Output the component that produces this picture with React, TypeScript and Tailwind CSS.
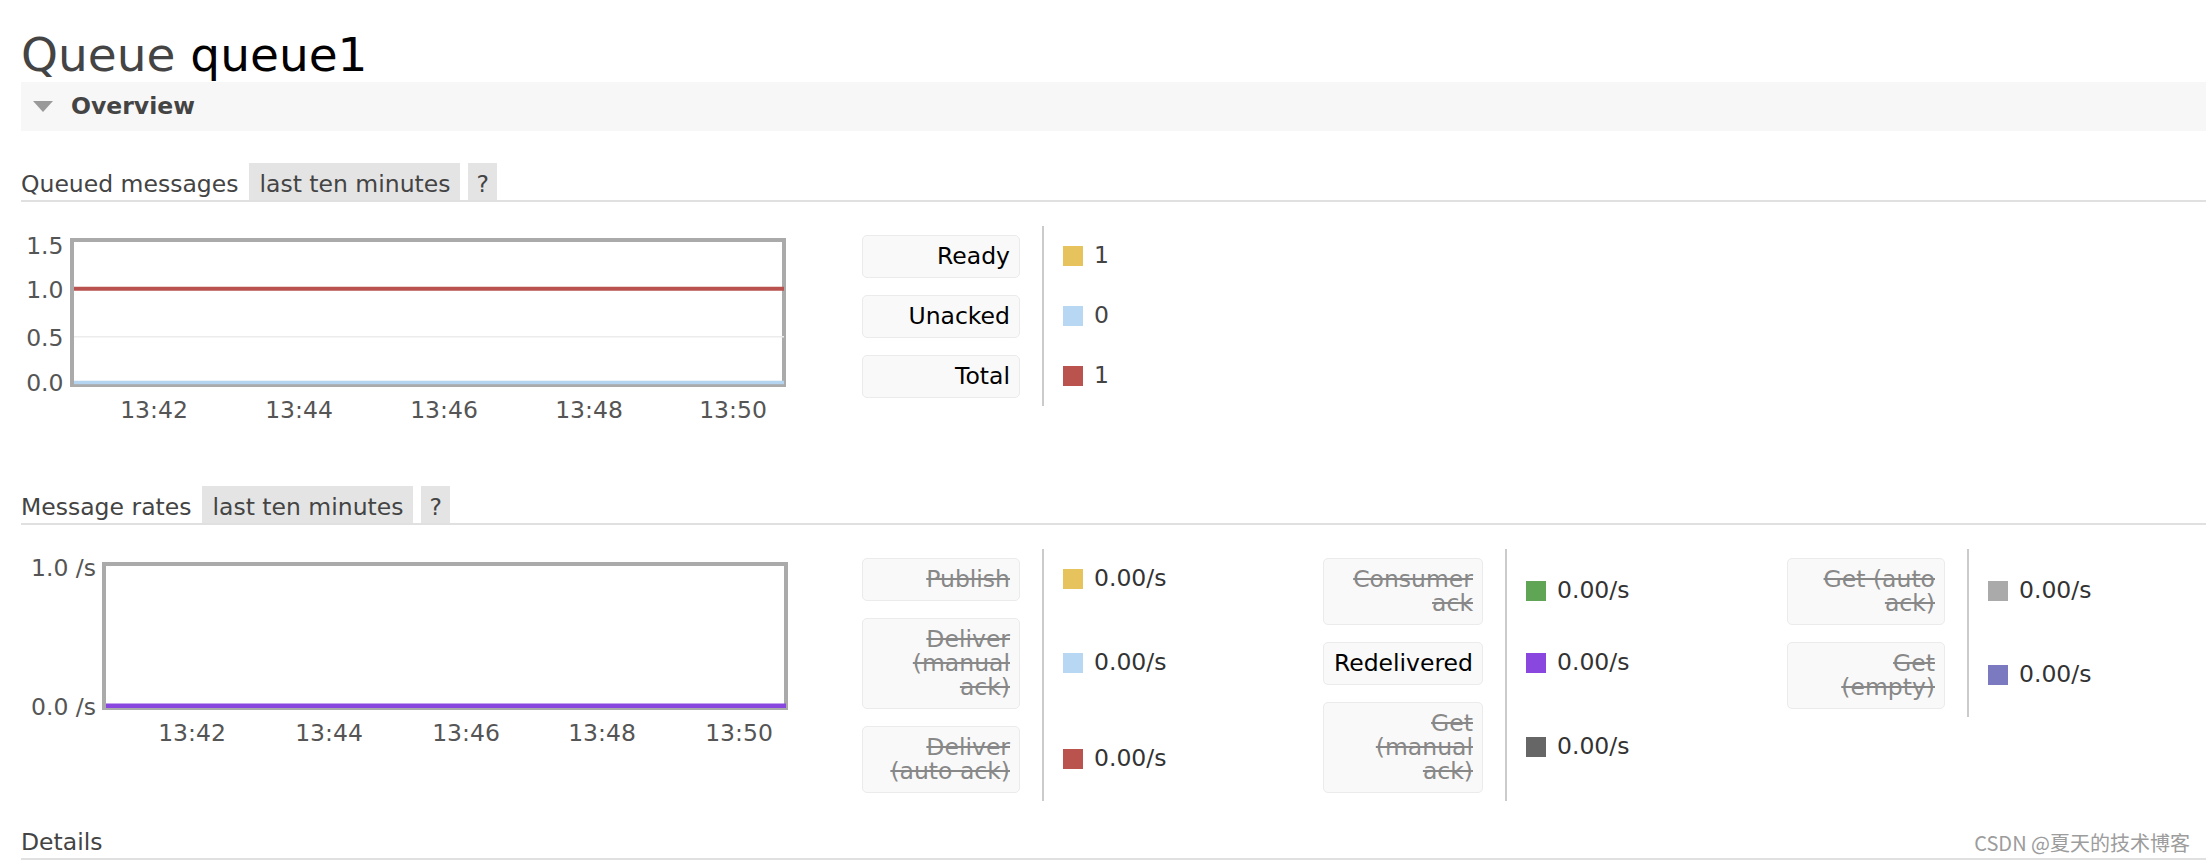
import React from "react";

type Row = { lines: string[]; struck: boolean; swatch: string; value: string };

function LabelBox({ lines, struck, width }: { lines: string[]; struck: boolean; width: string }) {
  return (
    <div
      className={`${width} rounded-[5px] border border-[#ebebeb] bg-[#f9f9f9] py-[8.5px] pr-[9px] text-right leading-[24px] ${
        struck ? "text-[#888888] line-through" : "text-black"
      }`}
    >
      {lines.map((l, i) => (
        <div key={i}>{l}</div>
      ))}
    </div>
  );
}

function StatTable({ rows, boxWidth, valueColor }: { rows: Row[]; boxWidth: string; valueColor: string }) {
  return (
    <div className="flex flex-col">
      {rows.map((r, i) => (
        <div key={i} className="flex">
          <div className="py-[8.5px] pr-[22px]">
            <LabelBox lines={r.lines} struck={r.struck} width={boxWidth} />
          </div>
          <div className="flex items-center gap-[11px] border-l-2 border-[#cbcbcb] pl-[19px]">
            <span className={`block h-[20px] w-[20px] ${r.swatch}`} />
            <span className={valueColor}>{r.value}</span>
          </div>
        </div>
      ))}
    </div>
  );
}

function SectionHeader({ title, withBoxes }: { title: string; withBoxes: boolean }) {
  return (
    <div className="flex border-b-2 border-[#e0e0e0] text-[#444444]">
      <span className="h-[37px] pt-[5px] leading-[32px]">{title}</span>
      {withBoxes && (
        <>
          <span className="ml-[11px] h-[37px] bg-[#e4e4e4] px-[10px] pt-[5px] leading-[32px]">last ten minutes</span>
          <span className="ml-[8px] h-[37px] bg-[#e4e4e4] px-[8px] pt-[5px] leading-[32px]">?</span>
        </>
      )}
    </div>
  );
}

function QueuedChart() {
  const xs = [
    { x: 133, t: "13:42" },
    { x: 278, t: "13:44" },
    { x: 423, t: "13:46" },
    { x: 568, t: "13:48" },
    { x: 712, t: "13:50" },
  ];
  const ys = [
    { y: 27.5, t: "1.5" },
    { y: 71.5, t: "1.0" },
    { y: 119.5, t: "0.5" },
    { y: 164.5, t: "0.0" },
  ];
  return (
    <svg width="770" height="200" viewBox="0 0 770 200" className="shrink-0">
      <rect x="51" y="14" width="712" height="145" fill="#ffffff" stroke="#aaaaaa" strokeWidth="4" />
      <line x1="53" y1="110.7" x2="763" y2="110.7" stroke="#ececec" strokeWidth="1.5" />
      <line x1="53" y1="62.7" x2="763" y2="62.7" stroke="#b9524e" strokeWidth="4" />
      <line x1="53" y1="156.6" x2="763" y2="156.6" stroke="#b4d4f0" strokeWidth="3.5" />
      {ys.map((l) => (
        <text key={l.t} x="42.5" y={l.y} textAnchor="end" fontSize="23.5" fill="#555555">
          {l.t}
        </text>
      ))}
      {xs.map((l) => (
        <text key={l.t} x={l.x} y="191.5" textAnchor="middle" fontSize="23.5" fill="#555555">
          {l.t}
        </text>
      ))}
    </svg>
  );
}

function RatesChart() {
  const xs = [
    { x: 171, t: "13:42" },
    { x: 308, t: "13:44" },
    { x: 445, t: "13:46" },
    { x: 581, t: "13:48" },
    { x: 718, t: "13:50" },
  ];
  return (
    <svg width="770" height="200" viewBox="0 0 770 200" className="shrink-0">
      <rect x="83" y="15" width="682" height="144" fill="#ffffff" stroke="#aaaaaa" strokeWidth="4" />
      <line x1="85" y1="156.7" x2="765" y2="156.7" stroke="#8a47e0" strokeWidth="4.5" />
      <text x="75" y="27.4" textAnchor="end" fontSize="23.5" fill="#555555">
        1.0 /s
      </text>
      <text x="75" y="166" textAnchor="end" fontSize="23.5" fill="#555555">
        0.0 /s
      </text>
      {xs.map((l) => (
        <text key={l.t} x={l.x} y="192.4" textAnchor="middle" fontSize="23.5" fill="#555555">
          {l.t}
        </text>
      ))}
    </svg>
  );
}

export default function App() {
  const queued: Row[] = [
    { lines: ["Ready"], struck: false, swatch: "bg-[#e6c35c]", value: "1" },
    { lines: ["Unacked"], struck: false, swatch: "bg-[#b8d7f3]", value: "0" },
    { lines: ["Total"], struck: false, swatch: "bg-[#ba534e]", value: "1" },
  ];
  const col1: Row[] = [
    { lines: ["Publish"], struck: true, swatch: "bg-[#e6c35c]", value: "0.00/s" },
    { lines: ["Deliver", "(manual", "ack)"], struck: true, swatch: "bg-[#b8d7f3]", value: "0.00/s" },
    { lines: ["Deliver", "(auto ack)"], struck: true, swatch: "bg-[#ba534e]", value: "0.00/s" },
  ];
  const col2: Row[] = [
    { lines: ["Consumer", "ack"], struck: true, swatch: "bg-[#60a455]", value: "0.00/s" },
    { lines: ["Redelivered"], struck: false, swatch: "bg-[#8a47e0]", value: "0.00/s" },
    { lines: ["Get", "(manual", "ack)"], struck: true, swatch: "bg-[#666666]", value: "0.00/s" },
  ];
  const col3: Row[] = [
    { lines: ["Get (auto", "ack)"], struck: true, swatch: "bg-[#aaaaaa]", value: "0.00/s" },
    { lines: ["Get", "(empty)"], struck: true, swatch: "bg-[#7b79bf]", value: "0.00/s" },
  ];

  return (
    <div className="relative h-[862px] w-full overflow-hidden bg-white pl-[21px] font-['DejaVu_Sans',Verdana,sans-serif] text-[23.5px] text-[#444444]">
      <h1 className="h-[82px] pt-[28px] text-[47px] font-normal leading-[54px] text-[#444444]">
        Queue <span className="text-black">queue1</span>
      </h1>

      <div className="flex h-[49px] items-center bg-[#f7f7f7] pl-[12px]">
        <svg width="20" height="11" viewBox="0 0 20 11">
          <polygon points="0,0 20,0 10,11" fill="#9a9a9a" />
        </svg>
        <span className="ml-[18px] font-bold text-[#444444]">Overview</span>
      </div>

      <div className="mt-[32px]">
        <SectionHeader title="Queued messages" withBoxes />
      </div>
      <div className="mt-[24px] flex items-start">
        <QueuedChart />
        <div className="ml-[71px]">
          <StatTable rows={queued} boxWidth="w-[158px]" valueColor="text-[#444444]" />
        </div>
      </div>

      <div className="mt-[60px]">
        <SectionHeader title="Message rates" withBoxes />
      </div>
      <div className="mt-[24px] flex items-start">
        <RatesChart />
        <div className="ml-[71px] flex items-start">
          <div className="w-[461px]">
            <StatTable rows={col1} boxWidth="w-[158px]" valueColor="text-[#333333]" />
          </div>
          <div className="w-[464px]">
            <StatTable rows={col2} boxWidth="w-[160px]" valueColor="text-[#333333]" />
          </div>
          <div>
            <StatTable rows={col3} boxWidth="w-[158px]" valueColor="text-[#333333]" />
          </div>
        </div>
      </div>

      <div className="mt-[20px]">
        <SectionHeader title="Details" withBoxes={false} />
      </div>

      <div className="absolute right-[16px] top-[829px] font-['Noto_Sans_CJK_SC',sans-serif] text-[20px] leading-[28px] text-[#9c9c9c]">
        CSDN @夏天的技术博客
      </div>
    </div>
  );
}
